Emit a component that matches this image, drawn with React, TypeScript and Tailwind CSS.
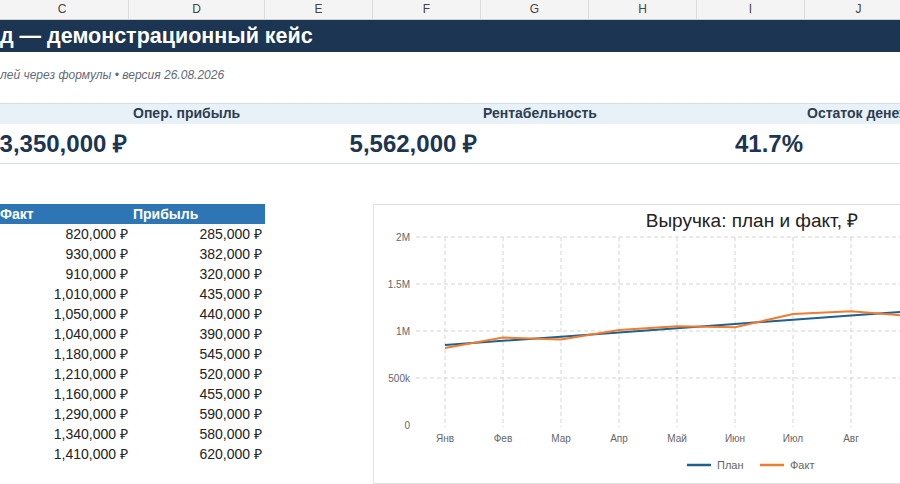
const COLS = [
  { id: "C", w: "w-[133px]" },
  { id: "D", w: "w-[136px]" },
  { id: "E", w: "w-[108px]" },
  { id: "F", w: "w-[108px]" },
  { id: "G", w: "w-[108px]" },
  { id: "H", w: "w-[108px]" },
  { id: "I", w: "w-[108px]" },
  { id: "J", w: "w-[108px]" },
];

const ROWS: [string, string][] = [
  ["820,000 ₽", "285,000 ₽"],
  ["930,000 ₽", "382,000 ₽"],
  ["910,000 ₽", "320,000 ₽"],
  ["1,010,000 ₽", "435,000 ₽"],
  ["1,050,000 ₽", "440,000 ₽"],
  ["1,040,000 ₽", "390,000 ₽"],
  ["1,180,000 ₽", "545,000 ₽"],
  ["1,210,000 ₽", "520,000 ₽"],
  ["1,160,000 ₽", "455,000 ₽"],
  ["1,290,000 ₽", "590,000 ₽"],
  ["1,340,000 ₽", "580,000 ₽"],
  ["1,410,000 ₽", "620,000 ₽"],
];

const MONTHS = ["Янв", "Фев", "Мар", "Апр", "Май", "Июн", "Июл", "Авг", "Сен", "Окт", "Ноя", "Дек"];
const PLAN = [850, 895, 940, 985, 1030, 1075, 1120, 1165, 1210, 1255, 1300, 1345];
const FACT = [820, 930, 910, 1010, 1050, 1040, 1180, 1210, 1160, 1290, 1340, 1410];

const px = (i: number) => 71 + 58 * i;
const py = (v: number) => 220 - (v * 188) / 2000;

/** Line chart "Выручка: план и факт" — grid, two series and legend. */
function RevenueChart() {
  const ticks = [
    { v: 2000, label: "2M" },
    { v: 1500, label: "1.5M" },
    { v: 1000, label: "1M" },
    { v: 500, label: "500k" },
    { v: 0, label: "0" },
  ];
  const line = (data: number[]) => data.map((v, i) => `${i ? "L" : "M"}${px(i)} ${py(v)}`).join(" ");

  return (
    <div className="h-[280px] w-[758px] flex-none border border-[#e2e2e2] bg-white">
      <svg width="756" height="278" className="block">
        <text x="378" y="22" textAnchor="middle" fontSize="19" fill="#222">
          Выручка: план и факт, ₽
        </text>

        {ticks.map((t) => (
          <g key={t.label}>
            {t.v > 0 && (
              <line x1="42" x2="756" y1={py(t.v)} y2={py(t.v)} stroke="#d4d4d4" strokeDasharray="4 3" />
            )}
            <text x="36" y={py(t.v) + 3.5} textAnchor="end" fontSize="10" fill="#666">
              {t.label}
            </text>
          </g>
        ))}

        {MONTHS.map((m, i) => (
          <g key={m}>
            <line x1={px(i)} x2={px(i)} y1={py(2000)} y2={py(0) + 2} stroke="#d4d4d4" strokeDasharray="4 3" />
            <text x={px(i)} y="237" textAnchor="middle" fontSize="10" fill="#666">
              {m}
            </text>
          </g>
        ))}

        <path d={line(PLAN)} fill="none" stroke="#1f618d" strokeWidth="2" />
        <path d={line(FACT)} fill="none" stroke="#ed7d31" strokeWidth="2" />

        <line x1="313" x2="337" y1="260" y2="260" stroke="#1f618d" strokeWidth="2.5" />
        <text x="343" y="264" fontSize="11" fill="#666">
          План
        </text>
        <line x1="386" x2="410" y1="260" y2="260" stroke="#ed7d31" strokeWidth="2.5" />
        <text x="416" y="264" fontSize="11" fill="#666">
          Факт
        </text>
      </svg>
    </div>
  );
}

export default function App() {
  return (
    <div className="h-[484px] w-[900px] overflow-hidden bg-white font-['Liberation_Sans',Arial,sans-serif]">
      <div className="-ml-[4px] w-[913px]">
        {/* column letters */}
        <div className="flex h-[20px] border-b border-[#cfcfcf] bg-[#f4f4f4]">
          {COLS.map((c) => (
            <div
              key={c.id}
              className={`${c.w} flex-none border-r border-[#dcdcdc] text-center text-[12px] leading-[19px] text-[#444]`}
            >
              {c.id}
            </div>
          ))}
        </div>

        {/* title bar */}
        <div className="h-[32px] whitespace-nowrap bg-[#1b3552] pl-[4px] text-[21.5px] font-bold leading-[33px] text-white">
          д — демонстрационный кейс
        </div>

        {/* subtitle */}
        <div className="h-[51px] whitespace-nowrap pl-[4px] pt-[15px] text-[12px] italic leading-[16px] text-[#5f6b7a]">
          лей через формулы • версия 26.08.2026
        </div>

        {/* KPI labels */}
        <div className="flex h-[21px] border-t-[1.5px] border-[#d3deea] bg-[#e8f0f8] text-[14px] font-bold leading-[19px] text-[#2c3e50]">
          <div className="w-[133px] flex-none" />
          <div className="w-[136px] flex-none whitespace-nowrap pl-[4px]">Опер. прибыль</div>
          <div className="w-[108px] flex-none" />
          <div className="w-[108px] flex-none" />
          <div className="w-[108px] flex-none whitespace-nowrap pl-[2px]">Рентабельность</div>
          <div className="w-[108px] flex-none" />
          <div className="w-[108px] flex-none" />
          <div className="w-[108px] flex-none whitespace-nowrap pl-[2px]">Остаток денежных средств</div>
        </div>

        {/* KPI values */}
        <div className="flex h-[40px] border-b-[1.5px] border-[#d3deea] text-[24px] font-bold leading-[39px] text-[#1b3552]">
          <div className="flex w-[133px] flex-none justify-end whitespace-nowrap pr-[2px]">3,350,000 ₽</div>
          <div className="w-[136px] flex-none" />
          <div className="w-[108px] flex-none" />
          <div className="flex w-[108px] flex-none justify-end whitespace-nowrap pr-[4px]">
            <span className="flex-none">5,562,000 ₽</span>
          </div>
          <div className="w-[108px] flex-none" />
          <div className="w-[108px] flex-none" />
          <div className="flex w-[108px] flex-none justify-end whitespace-nowrap pr-[2px]">41.7%</div>
        </div>

        {/* table + chart */}
        <div className="mt-[40px] flex">
          <div className="w-[269px] flex-none">
            <div className="flex h-[20px] bg-[#2e75b6] text-[14px] font-bold leading-[20px] text-white">
              <div className="w-[133px] flex-none pl-[4px]">Факт</div>
              <div className="w-[136px] flex-none pl-[4px]">Прибыль</div>
            </div>
            {ROWS.map(([fact, profit], i) => (
              <div key={i} className="flex h-[20px] text-[14px] leading-[20px] text-[#222]">
                <div className="w-[133px] flex-none pr-[1px] text-right">{fact}</div>
                <div className="w-[136px] flex-none pr-[3px] text-right">{profit}</div>
              </div>
            ))}
          </div>
          <div className="w-[108px] flex-none" />
          <RevenueChart />
        </div>
      </div>
    </div>
  );
}
